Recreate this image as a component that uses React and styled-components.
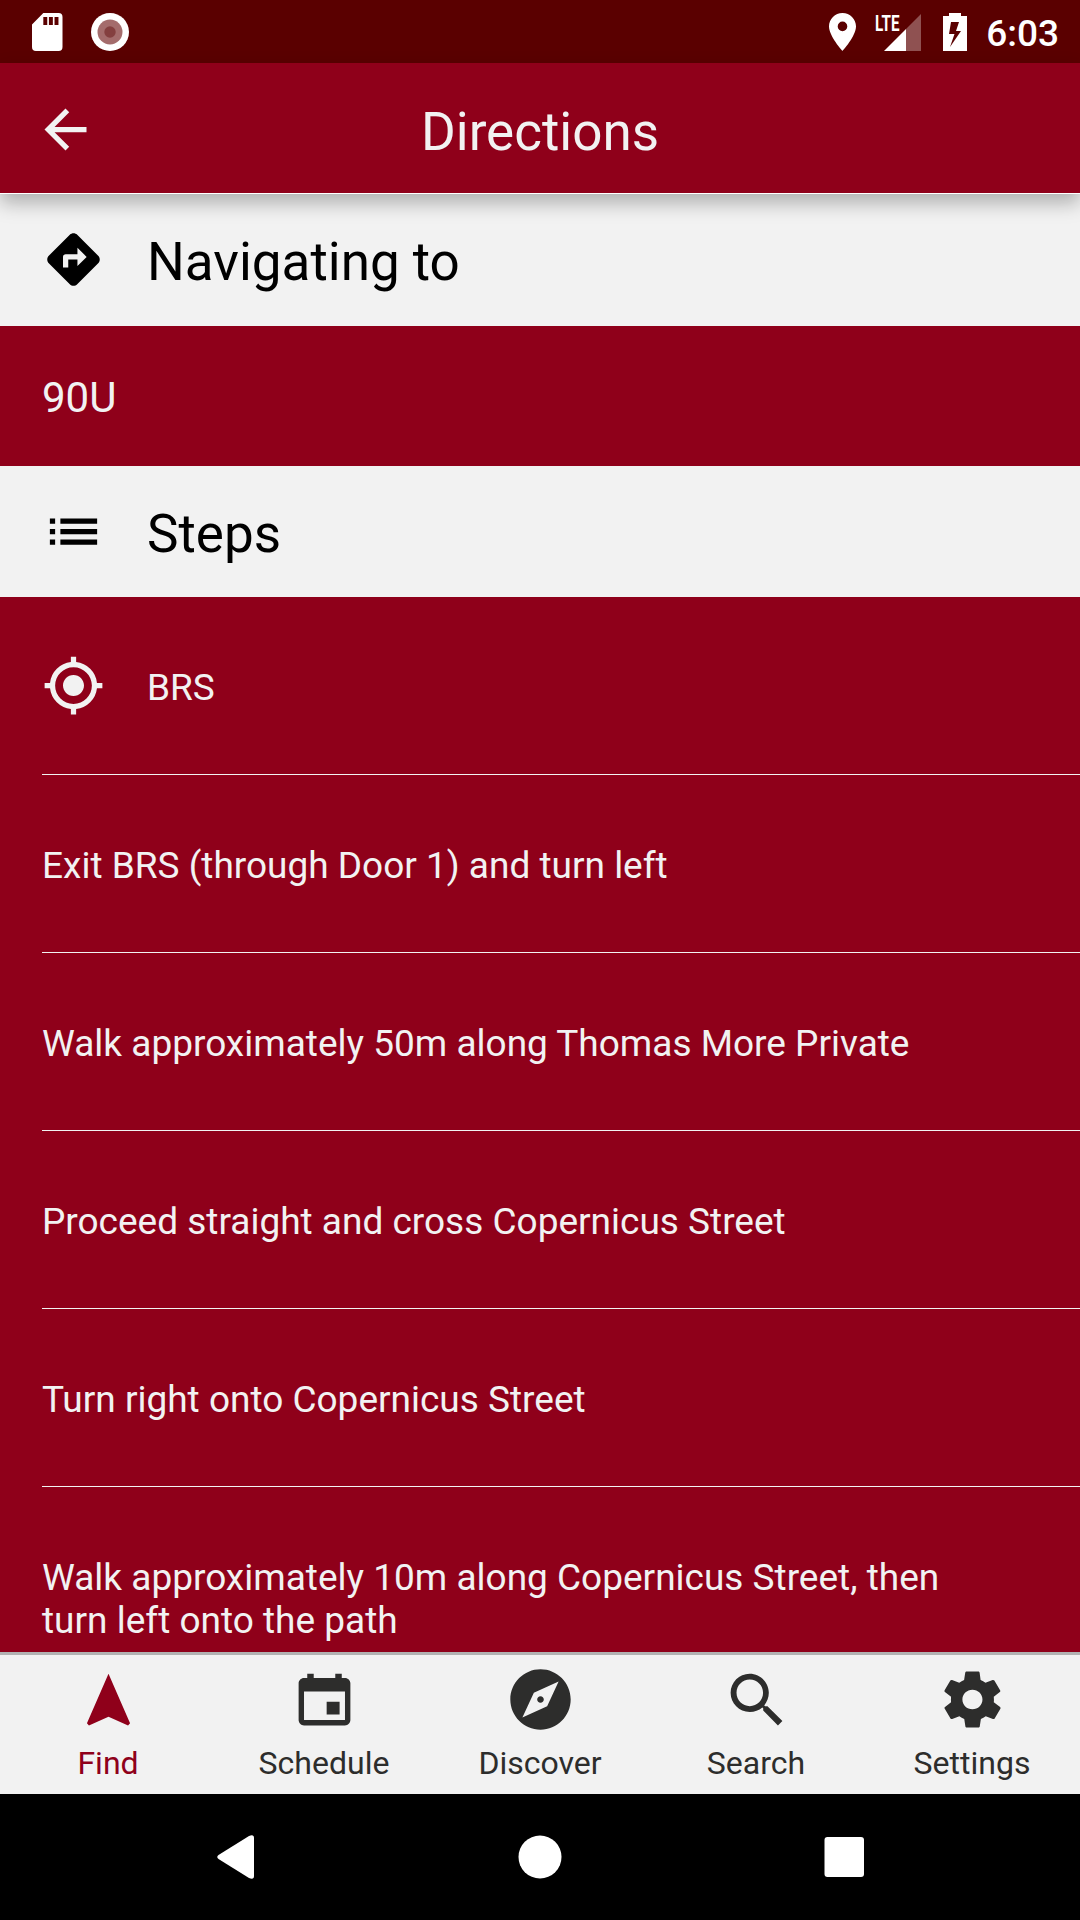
import React from "react";
import styled, { createGlobalStyle } from "styled-components";
import { MdArrowBack, MdDirections, MdList, MdMyLocation } from "react-icons/md";
import { IoMdNavigate, IoMdCalendar, IoMdCompass, IoMdSearch, IoMdSettings } from "react-icons/io";

const Global = createGlobalStyle`
  * { box-sizing: border-box; }
  body { margin: 0; background: #000; }
`;

const crimson = "#8f001a";
const pale = "#f2f2f2";

const Screen = styled.div`
  width: 1080px;
  height: 1920px;
  display: flex;
  flex-direction: column;
  overflow: hidden;
  font-family: Roboto, sans-serif;
  color: ${pale};
  background: ${crimson};
`;

const StatusBar = styled.header`
  flex: none;
  height: 63px;
  background: #5a0000;
  color: #fff;
  display: flex;
  justify-content: space-between;
  svg { display: block; flex: none; }
`;

const StatusGroup = styled.div`
  display: flex;
  padding: ${(p) => p.$pad};
  gap: ${(p) => p.$gap};
`;

const Clock = styled.time`
  font-size: 37px;
  font-weight: 500;
  line-height: 42px;
`;

const AppBar = styled.div`
  flex: none;
  height: 131px;
  display: grid;
  grid-template-columns: 132px 1fr 132px;
  align-items: center;
  background: ${crimson};
  border-bottom: 1px solid #fff;
  box-shadow: 0 9px 18px rgba(0, 0, 0, 0.28);
  position: relative;
  z-index: 1;
`;

const BackButton = styled.button`
  border: 0;
  padding: 2px 0 0 34px;
  background: none;
  color: ${pale};
  svg { display: block; }
`;

const Title = styled.h1`
  margin: 7px 0 0;
  font-size: 53px;
  font-weight: 400;
  line-height: 62px;
  text-align: center;
`;

const Content = styled.main`
  flex: 1;
  min-height: 0;
  overflow: hidden;
`;

const SectionHeader = styled.div`
  height: ${(p) => p.$height}px;
  display: flex;
  align-items: flex-start;
  gap: 42px;
  padding: 34px 0 0 42px;
  background: ${pale};
  color: #000;
  svg { flex: none; }
`;

const SectionTitle = styled.h2`
  margin: 3px 0 0;
  font-size: 53px;
  font-weight: 400;
  line-height: 62px;
`;

const Destination = styled.div`
  height: 140px;
  padding: 47px 42px 0;
  font-size: 42px;
  line-height: 50px;
`;

const StepList = styled.ol`
  list-style: none;
  margin: 0;
  padding: 0 0 0 42px;
`;

const Step = styled.li`
  height: 178px;
  display: flex;
  align-items: flex-start;
  gap: 42px;
  padding: 69px 110px 0 0;
  border-bottom: 1px solid ${pale};
  font-size: 37px;
  line-height: 43px;
  svg { flex: none; margin-top: -12px; }
`;

const TabBar = styled.nav`
  flex: none;
  height: 142px;
  display: grid;
  grid-template-columns: repeat(5, 1fr);
  background: ${pale};
  border-top: 3px solid #b2b2b2;
`;

const Tab = styled.a`
  display: flex;
  flex-direction: column;
  align-items: center;
  padding-top: 10px;
  font-size: 32px;
  line-height: 37px;
  color: ${(p) => (p.$active ? crimson : "#2d2d2c")};
  svg { display: block; flex: none; margin-bottom: 11px; }
`;

const SystemNav = styled.footer`
  flex: none;
  height: 126px;
  display: flex;
  justify-content: center;
  align-items: center;
  gap: 240px;
  background: #000;
  svg { display: block; flex: none; }
`;

const steps = [
  "Exit BRS (through Door 1) and turn left",
  "Walk approximately 50m along Thomas More Private",
  "Proceed straight and cross Copernicus Street",
  "Turn right onto Copernicus Street",
  "Walk approximately 10m along Copernicus Street, then turn left onto the path",
];

const tabs = [
  ["Find", IoMdNavigate],
  ["Schedule", IoMdCalendar],
  ["Discover", IoMdCompass],
  ["Search", IoMdSearch],
  ["Settings", IoMdSettings],
];

function SdCard() {
  return (
    <svg width="30.500" height="38" viewBox="0 0 31 38" preserveAspectRatio="none">
      <path fill="#fff" fillRule="evenodd" d="M11.500 0H27q4 0 4 4V34q0 4-4 4H4q-4 0-4-4V11.500ZM11.500 4v8h4V4Zm5.700 0v8h4V4Zm5.700 0v8h4V4Z" />
    </svg>
  );
}

function Recording() {
  return (
    <svg width="38" height="38" viewBox="0 0 38 38">
      <circle cx="19" cy="19" r="19" fill="#fff" />
      <circle cx="19" cy="19" r="12.500" fill="#a46c6c" />
      <circle cx="19" cy="19" r="5.700" fill="#843f3f" />
    </svg>
  );
}

function Pin() {
  return (
    <svg width="27" height="38" viewBox="0 0 27 38">
      <path fill="#fff" fillRule="evenodd" d="M13.500 0C6 0 0 6 0 13.300 0 23.300 13.500 38 13.500 38S27 23.300 27 13.300C27 6 21 0 13.500 0Zm0 18.200a4.800 4.800 0 1 1 0-9.600 4.800 4.800 0 0 1 0 9.600Z" />
    </svg>
  );
}

const SignalIcon = styled.svg`
  margin: -8px 2.5px 0 0;
  overflow: visible;
`;

function Signal() {
  return (
    <SignalIcon width="47" height="46" viewBox="0 -8 47 46">
      <path fill="#8f5151" d="M46 1V38H31V16Z" />
      <path fill="#fff" d="M31 16V38H9Z" />
      <text x="0" y="17.500" fill="#fff" fontSize="22.500" fontWeight="700" fontFamily="Roboto, sans-serif" textLength="24.500" lengthAdjust="spacingAndGlyphs">LTE</text>
    </SignalIcon>
  );
}

function Battery() {
  return (
    <svg width="24" height="38" viewBox="0 0 24 38">
      <path fill="#fff" fillRule="evenodd" d="M6 0H18V3H24V38H0V3H6ZM8 9 6 21h5.500L7 34 18 18H13L16 9Z" />
    </svg>
  );
}

export default function App() {
  return (
    <Screen>
      <Global />
      <StatusBar>
        <StatusGroup $pad="12.500px 0 0 32px" $gap="28.500px">
          <SdCard />
          <Recording />
        </StatusGroup>
        <StatusGroup $pad="12.500px 21px 0 0" $gap="19px">
          <Pin />
          <Signal />
          <Battery />
          <Clock>6:03</Clock>
        </StatusGroup>
      </StatusBar>
      <AppBar>
        <BackButton aria-label="Back"><MdArrowBack size={63} /></BackButton>
        <Title>Directions</Title>
      </AppBar>
      <Content>
        <SectionHeader $height={132}>
          <MdDirections size={63} />
          <SectionTitle>Navigating to</SectionTitle>
        </SectionHeader>
        <Destination>90U</Destination>
        <SectionHeader $height={131}>
          <MdList size={63} />
          <SectionTitle>Steps</SectionTitle>
        </SectionHeader>
        <StepList>
          <Step><MdMyLocation size={63} />BRS</Step>
          {steps.map((text) => <Step key={text}>{text}</Step>)}
        </StepList>
      </Content>
      <TabBar>
        {tabs.map(([label, Icon], i) => (
          <Tab key={label} $active={i === 0}>
            <Icon size={69} />
            {label}
          </Tab>
        ))}
      </TabBar>
      <SystemNav>
        <svg width="64" height="64" viewBox="0 0 64 64"><path fill="#fff" d="M14.500 30 45 11q5-2 5 2V51q0 4-5 2L14.500 34q-2.500-2 0-4Z" /></svg>
        <svg width="64" height="64" viewBox="0 0 64 64"><circle cx="32" cy="32" r="21.500" fill="#fff" /></svg>
        <svg width="64" height="64" viewBox="0 0 64 64"><rect x="12.500" y="12" width="39.500" height="40" rx="3" fill="#fff" /></svg>
      </SystemNav>
    </Screen>
  );
}
